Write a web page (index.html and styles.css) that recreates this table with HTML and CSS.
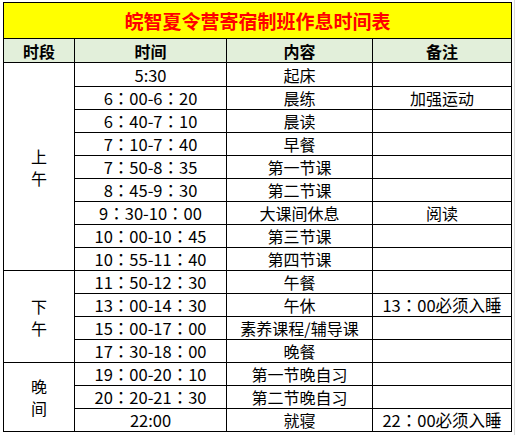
FILE: index.html
```html
<!DOCTYPE html>
<html lang="zh">
<head>
<meta charset="utf-8">
<title>皖智夏令营寄宿制班作息时间表</title>
<link rel="stylesheet" href="styles.css">
</head>
<body>
<div class="sheet">
<table class="schedule">
  <colgroup>
    <col class="c1"><col class="c2"><col class="c3"><col class="c4">
  </colgroup>
  <tr class="title-row"><td colspan="4" class="title">皖智夏令营寄宿制班作息时间表</td></tr>
  <tr class="head-row"><th>时段</th><th>时间</th><th>内容</th><th>备注</th></tr>
  <tr class="first"><td rowspan="9" class="period">上<br>午</td><td class="t">5:30</td><td>起床</td><td></td></tr>
  <tr><td class="t">6：00-6：20</td><td>晨练</td><td>加强运动</td></tr>
  <tr><td class="t">6：40-7：10</td><td>晨读</td><td></td></tr>
  <tr><td class="t">7：10-7：40</td><td>早餐</td><td></td></tr>
  <tr><td class="t">7：50-8：35</td><td>第一节课</td><td></td></tr>
  <tr><td class="t">8：45-9：30</td><td>第二节课</td><td></td></tr>
  <tr><td class="t">9：30-10：00</td><td>大课间休息</td><td>阅读</td></tr>
  <tr><td class="t">10：00-10：45</td><td>第三节课</td><td></td></tr>
  <tr><td class="t">10：55-11：40</td><td>第四节课</td><td></td></tr>
  <tr><td rowspan="4" class="period">下<br>午</td><td class="t">11：50-12：30</td><td>午餐</td><td></td></tr>
  <tr><td class="t">13：00-14：30</td><td>午休</td><td class="t">13<span class="colon" lang="zh-Hant">：</span>00必须入睡</td></tr>
  <tr><td class="t">15：00-17：00</td><td>素养课程/辅导课</td><td></td></tr>
  <tr><td class="t">17：30-18：00</td><td>晚餐</td><td></td></tr>
  <tr><td rowspan="3" class="period">晚<br>间</td><td class="t">19：00-20：10</td><td>第一节晚自习</td><td></td></tr>
  <tr><td class="t">20：20-21：30</td><td>第二节晚自习</td><td></td></tr>
  <tr><td class="t">22:00</td><td>就寝</td><td class="t">22<span class="colon" lang="zh-Hant">：</span>00必须入睡</td></tr>
</table>
</div>
</body>
</html>
```

FILE: styles.css
```css
html, body {
  margin: 0;
  padding: 0;
  background: #ffffff;
}

.sheet {
  box-sizing: border-box;
  width: 515px;
  height: 435px;
  padding: 2px 0 0 3px;
  border-right: 1px solid #d9d9d9;
}

.schedule {
  border-collapse: collapse;
  table-layout: fixed;
  width: 509px;
  font-family: "Noto Sans CJK SC", "Noto Sans", sans-serif;
  font-size: 16px;
  color: #000;
}

.c1 { width: 71px; }
.c2 { width: 152px; }
.c3 { width: 146px; }
.c4 { width: 139px; }

.schedule td,
.schedule th {
  border: 1px solid #000;
  padding: 0;
  text-align: center;
  vertical-align: middle;
  line-height: 20px;
  white-space: nowrap;
  overflow: hidden;
}

.schedule td.t {
  font-family: "Noto Sans CJK TC", "Noto Sans CJK SC", sans-serif;
  font-size: 16.5px;
}

.schedule .colon {
  font-family: "Noto Sans CJK TC", sans-serif;
}

.schedule tr { height: 23px; }
.schedule tr.first { height: 24px; }
.schedule tr.head-row { height: 24px; }
.schedule tr.title-row { height: 36px; }

.title {
  background: #ffff00;
  color: #ff0000;
  font-weight: bold;
  font-size: 19px;
}

.head-row th {
  background: #e2efda;
  font-weight: bold;
  font-size: 16px;
}

.schedule td.period {
  line-height: 22px;
  white-space: normal;
}
```
